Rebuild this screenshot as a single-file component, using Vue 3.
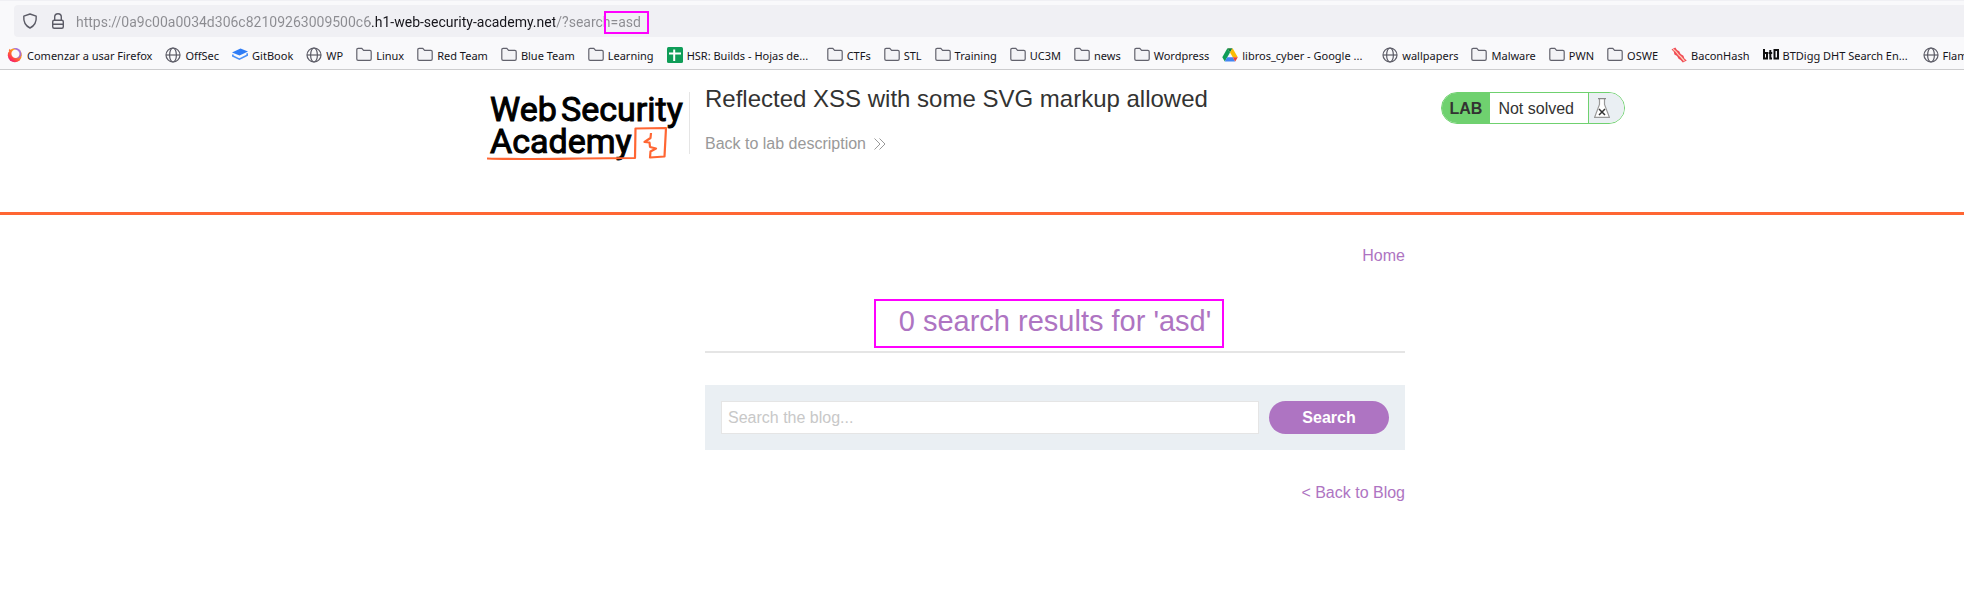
<script setup>
import { ref } from 'vue'

const url = ref('https://0a9c00a0034d306c82109263009500c6.h1-web-security-academy.net/?search=asd')
const query = ref('')

const bookmarks = [
  { icon: 'firefox', label: 'Comenzar a usar Firefox' },
  { icon: 'globe', label: 'OffSec' },
  { icon: 'gitbook', label: 'GitBook' },
  { icon: 'globe', label: 'WP' },
  { icon: 'folder', label: 'Linux' },
  { icon: 'folder', label: 'Red Team' },
  { icon: 'folder', label: 'Blue Team' },
  { icon: 'folder', label: 'Learning' },
  { icon: 'sheets', label: 'HSR: Builds - Hojas de...', long: true },
  { icon: 'folder', label: 'CTFs' },
  { icon: 'folder', label: 'STL' },
  { icon: 'folder', label: 'Training' },
  { icon: 'folder', label: 'UC3M' },
  { icon: 'folder', label: 'news' },
  { icon: 'folder', label: 'Wordpress' },
  { icon: 'drive', label: 'libros_cyber - Google ...', long: true },
  { icon: 'globe', label: 'wallpapers' },
  { icon: 'folder', label: 'Malware' },
  { icon: 'folder', label: 'PWN' },
  { icon: 'folder', label: 'OSWE' },
  { icon: 'bacon', label: 'BaconHash' },
  { icon: 'btd', label: 'BTDigg DHT Search En...', long: true },
  { icon: 'globe', label: 'Flam' },
]
</script>

<template>
  <div class="window">
    <header class="chrome">
      <div class="urlbar">
        <svg class="chrome-icon shield" viewBox="0 0 16 16" aria-hidden="true">
          <path d="M8 1 L14.2 3.2 C14.6 8 12.8 12.6 8 15 C3.2 12.6 1.4 8 1.8 3.2 Z" fill="none" stroke="#5b5b66" stroke-width="1.4" stroke-linejoin="round" />
        </svg>
        <svg class="chrome-icon" viewBox="0 0 16 16" aria-hidden="true">
          <rect x="2.7" y="7.2" width="10.6" height="8" rx="1.5" fill="none" stroke="#5b5b66" stroke-width="1.4" />
          <path d="M4.7 7 V4 A3.3 3.3 0 0 1 11.3 4 V7 M3 11.2 H13" fill="none" stroke="#5b5b66" stroke-width="1.4" />
        </svg>
        <div class="address">
          <input v-model="url" class="address-input" type="text" aria-label="Address" spellcheck="false" />
          <span class="mark"></span>
        </div>
      </div>
      <nav class="bookmarks" aria-label="Bookmarks">
        <a v-for="b in bookmarks" :key="b.label" class="bookmark" :class="{ long: b.long }" href="#">
          <svg class="bookmark-icon" viewBox="0 0 16 16" aria-hidden="true">
            <defs v-if="b.icon === 'firefox'">
              <linearGradient id="fx" x1="1" y1="0" x2="0.2" y2="1">
                <stop offset="0" stop-color="#ffe226" />
                <stop offset="0.45" stop-color="#ff8a1e" />
                <stop offset="0.8" stop-color="#ff3750" />
                <stop offset="1" stop-color="#e31587" />
              </linearGradient>
            </defs>
            <template v-if="b.icon === 'firefox'">
              <circle cx="7.8" cy="8.3" r="7" fill="url(#fx)" />
              <circle cx="8.6" cy="6.8" r="4.2" fill="#f9f9fb" />
              <path d="M5.5 1.8 C9.5 -.5 15 2 14.4 8 C13.6 10.8 11 11.8 9 11.2 C12 10.4 13 8 12.2 5.6 C11 2.8 8 2.2 5.5 1.8" fill="#9059ff" opacity=".75" />
              <path d="M1.8 4 L2.5 1.8 L4.4 3.8" fill="#ff6a2b" />
            </template>
            <g v-else-if="b.icon === 'globe'" fill="none" stroke="#5b5b66" stroke-width="1.2">
              <circle cx="8" cy="8" r="7" />
              <ellipse cx="8" cy="8" rx="3.4" ry="7" />
              <path d="M1 8 H15" />
            </g>
            <template v-else-if="b.icon === 'gitbook'">
              <path d="M8.5 1.6 L16 4.6 L7.6 8.6 L0 5.6 Z" fill="#2f7df6" />
              <path d="M.8 7.4 V9 L7.4 12.2 L15.2 8.2 V6.2" fill="none" stroke="#4a90f8" stroke-width="1.6" />
            </template>
            <path v-else-if="b.icon === 'folder'" d="M.8 2.7 A1.3 1.3 0 0 1 2.1 1.4 H5.8 L7.6 3.4 H13.9 A1.3 1.3 0 0 1 15.2 4.7 V12 A1.3 1.3 0 0 1 13.9 13.3 H2.1 A1.3 1.3 0 0 1 .8 12 Z" fill="#f3f3f6" stroke="#62626d" stroke-width="1.2" />
            <template v-else-if="b.icon === 'sheets'">
              <rect width="16" height="16" rx="1.5" fill="#0f9d58" />
              <path d="M2 6.5 H14 M7.2 2.5 V14" stroke="#fff" stroke-width="2" />
            </template>
            <template v-else-if="b.icon === 'drive'">
              <path d="M5.4 1.2 L8 5.4 L2.8 14.4 L.3 10.2 Z" fill="#0f9d58" />
              <path d="M5.4 1.2 H10.6 L8 5.4 Z" fill="#188038" />
              <path d="M10.6 1.2 L15.8 10.2 H10.8 L8 5.4 Z" fill="#fbbc04" />
              <path d="M5.2 10.2 H10.8 L13.2 14.4 H2.8 Z" fill="#4285f4" />
              <path d="M10.8 10.2 H15.8 L13.2 14.4 Z" fill="#ea4335" />
            </template>
            <template v-else-if="b.icon === 'bacon'">
              <path d="M.5 2.6 L4.3 .5 L6 3 L8.2 4.2 L9.6 7 L12.4 8.8 L13.4 11.6 L15.8 13.4 L11.8 15.6 L9.6 13 L7.6 11.8 L6 9 L3.4 7.6 L2.8 4.8 Z" fill="#f04a55" />
              <path d="M2.2 2.2 L5 4.6 L7.4 7.6 L10 10 L13.4 14" fill="none" stroke="#ffd0b8" stroke-width="1.2" />
            </template>
            <g v-else fill="none" stroke="#111" stroke-width="2">
              <path d="M1 2 V12.5 M1 6 H4 V11.5 H1 M7.3 3 V11.5 H9 M5.6 6 H9.2 M11.5 3 H15 V11.5 H11.5 Z" />
            </g>
          </svg>
          <span class="bookmark-label">{{ b.label }}</span>
        </a>
      </nav>
    </header>

    <div class="page">
      <section class="lab-header">
        <div class="lab-inner">
          <svg class="logo" viewBox="0 0 200 72" role="img" aria-label="Web Security Academy">
            <g class="logo-text">
              <text x="3" y="29">Web</text>
              <text x="74" y="29">Security</text>
              <text x="3" y="61">Academy</text>
            </g>
            <path d="M0 66.5 C40 68 90 66 148 66 L148.5 36.5 L179 36 L177.5 64.5 L163 65.5 L163.5 59.5 L169 56.5 L163 55 L162.5 50.5 L157.5 50 L163.5 46 L164 41" fill="none" stroke="#ff6633" stroke-width="2.2" stroke-linejoin="round" />
          </svg>
          <div class="title">
            <h2>Reflected XSS with some SVG markup allowed</h2>
            <a class="back" href="#">
              Back to lab description
              <svg class="chevrons" viewBox="0 0 12 12" aria-hidden="true">
                <path d="M.5 .5 L6 6 L.5 11.5 M5.5 .5 L11 6 L5.5 11.5" fill="none" stroke="#999" />
              </svg>
            </a>
          </div>
          <div class="status">
            <strong>LAB</strong>
            <span class="state">Not solved</span>
            <span class="flask">
              <svg viewBox="0 0 16 20" aria-hidden="true">
                <path d="M5.5 .7 V6.5 L.6 19.3 H15.4 L10.5 6.5 V.7" fill="#fff" stroke="#999" stroke-width="1.2" />
                <path d="M4 .7 H12" stroke="#888" stroke-width="1.2" />
                <path d="M5 11 L11 17 M11 11 L5 17" stroke="#333" stroke-width="1.5" />
              </svg>
            </span>
          </div>
        </div>
      </section>

      <main class="blog">
        <nav class="top-links"><a href="#">Home</a></nav>
        <div class="results">
          <h1>0 search results for 'asd'</h1>
        </div>
        <form class="search" @submit.prevent>
          <input v-model="query" type="text" placeholder="Search the blog..." aria-label="Search the blog" />
          <button type="submit">Search</button>
        </form>
        <div class="bottom-links"><a href="#">&lt; Back to Blog</a></div>
      </main>
    </div>
  </div>
</template>

<style>
body {
  margin: 0;
  background: #fff;
}
</style>

<style scoped>
.window {
  overflow: hidden;
  font-family: "Liberation Sans", Arial, sans-serif;
  font-size: 16px;
  color: #333332;
}
a {
  text-decoration: none;
}
.chrome {
  background: #f9f9fb;
  border-top: 1px solid #f0f0f4;
  border-bottom: 1px solid #ccccce;
  padding-top: 4px;
  font-family: "Noto Sans", "Open Sans", sans-serif;
}
.urlbar {
  display: flex;
  align-items: center;
  gap: 10px;
  height: 32px;
  margin-left: 14px;
  padding-left: 8px;
  border-radius: 4px 0 0 4px;
  background: #f0f0f4;
}
.chrome-icon {
  flex: none;
  width: 16px;
  height: 16px;
}
.shield {
  margin-right: 2px;
}
.address {
  position: relative;
  flex: 1;
  display: flex;
}
.address-input {
  flex: 1;
  box-sizing: border-box;
  height: 24px;
  padding: 2px 0 0;
  border: 0;
  outline: 0;
  font: 14px Roboto, sans-serif;
  color: #15141a;
  -webkit-text-fill-color: transparent;
  background: linear-gradient(90deg, #8b8b90 294px, #15141a 294px, #15141a 479px, #8b8b90 479px);
  -webkit-background-clip: text;
  background-clip: text;
}
.mark {
  position: absolute;
  left: 528px;
  top: 2px;
  width: 41px;
  height: 19px;
  border: 2px solid #ff00ff;
}
.bookmarks {
  display: flex;
  align-items: center;
  gap: 13px;
  box-sizing: border-box;
  height: 32px;
  padding: 4px 0 0 7px;
}
.bookmark {
  display: flex;
  flex: none;
  align-items: center;
  gap: 4px;
  font-size: 11px;
  line-height: 16px;
  color: #15141a;
  white-space: nowrap;
}
.bookmark.long {
  width: 147px;
}
.bookmark-icon {
  flex: none;
  width: 16px;
  height: 16px;
}
.bookmark-label {
  padding-top: 2px;
}
.page {
  width: calc(100% + 146px);
}
.lab-header {
  border-bottom: 3px solid #ff6633;
}
.lab-inner {
  display: flex;
  align-items: flex-start;
  box-sizing: border-box;
  max-width: 1140px;
  height: 142px;
  margin: 0 auto;
  padding-top: 22px;
}
.logo {
  flex: none;
  width: 200px;
  height: 72px;
  margin-left: 2px;
}
.logo-text {
  font-family: Roboto, sans-serif;
  font-size: 34px;
  fill: #000;
  stroke: #000;
  stroke-width: 1px;
}
.title {
  flex: 1;
  height: 62px;
  margin-left: 2px;
  padding-left: 15px;
  border-left: 1px solid #e5e5e5;
}
h2 {
  margin: -9px 0 0;
  font-size: 24px;
  line-height: 32px;
  font-weight: 400;
}
.back {
  display: flex;
  align-items: center;
  gap: 8px;
  margin-top: 17px;
  line-height: 24px;
  color: #999;
}
.chevrons {
  width: 12px;
  height: 12px;
}
.status {
  display: flex;
  box-sizing: border-box;
  height: 32px;
  border: 1px solid #6fd16f;
  border-radius: 16px;
  overflow: hidden;
  line-height: 32px;
}
.status strong {
  padding: 0 8px;
  background: #6fd16f;
}
.state {
  padding: 0 14px 0 8px;
}
.flask {
  display: flex;
  align-items: center;
  width: 30px;
  padding-left: 5px;
  border-left: 1px solid #6fd16f;
  background: #eaeff3;
}
.flask svg {
  width: 16px;
  height: 20px;
}
.blog {
  max-width: 700px;
  margin: 0 auto;
  padding-top: 29px;
}
.blog a {
  color: #ae74c2;
}
.top-links,
.bottom-links {
  text-align: right;
  line-height: 24px;
}
.results {
  display: flex;
  justify-content: center;
  padding: 31px 0 3px;
  border-bottom: 2px solid #e5e5e5;
}
h1 {
  margin: 0 12px 0 0;
  padding: 0 11px 4px 23px;
  border: 2px solid #ff00ff;
  font-size: 29px;
  line-height: 41px;
  font-weight: 400;
  color: #ae74c2;
}
.search {
  display: flex;
  gap: 10px;
  margin-top: 32px;
  padding: 16px;
  background: #eaeff3;
}
.search input {
  flex: 1;
  box-sizing: border-box;
  height: 33px;
  padding: 0 6px;
  border: 1px solid #e5e5e5;
  font: 16px "Liberation Sans", Arial, sans-serif;
  color: #333332;
}
.search input::placeholder {
  color: #c8c8c8;
}
.search button {
  width: 120px;
  height: 33px;
  padding: 0;
  border: 0;
  border-radius: 17px;
  background: #ae74c2;
  font: bold 16px "Liberation Sans", Arial, sans-serif;
  color: #fff;
}
.bottom-links {
  margin-top: 31px;
}
</style>
